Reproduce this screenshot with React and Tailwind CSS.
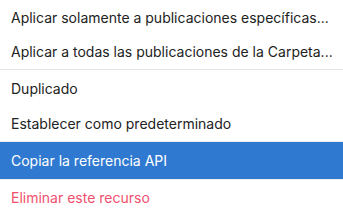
import React from 'react';

// Menú contextual de recurso
const items = [
  { label: 'Aplicar solamente a publicaciones específicas...', h: 'h-[34px]' },
  { label: 'Aplicar a todas las publicaciones de la Carpeta...', h: 'h-[35px]' },
];

export default function App() {
  return (
    <div
      className="w-[343px] h-[214px] bg-white overflow-hidden text-[14px] text-[#222]"
      style={{ fontFamily: 'Inter, "Noto Sans", sans-serif' }}
    >
      {items.map(item => (
        <div key={item.label} className={`${item.h} flex items-center px-[11px] whitespace-nowrap`}>
          {item.label}
        </div>
      ))}
      <div className="h-px bg-[#e5e5e5]" />
      <div className="h-[36px] flex items-center px-[11px]">Duplicado</div>
      <div className="h-[35px] flex items-center px-[11px]">Establecer como predeterminado</div>
      <div className="h-px bg-[#eeeeee]" />
      <div className="h-[37px] flex items-center px-[11px] bg-[#2f7ad0] text-white">
        Copiar la referencia API
      </div>
      <div className="h-px bg-[#eeeeee]" />
      <div className="h-[34px] flex items-center px-[11px] text-[#f0506e]">Eliminar este recurso</div>
    </div>
  );
}
